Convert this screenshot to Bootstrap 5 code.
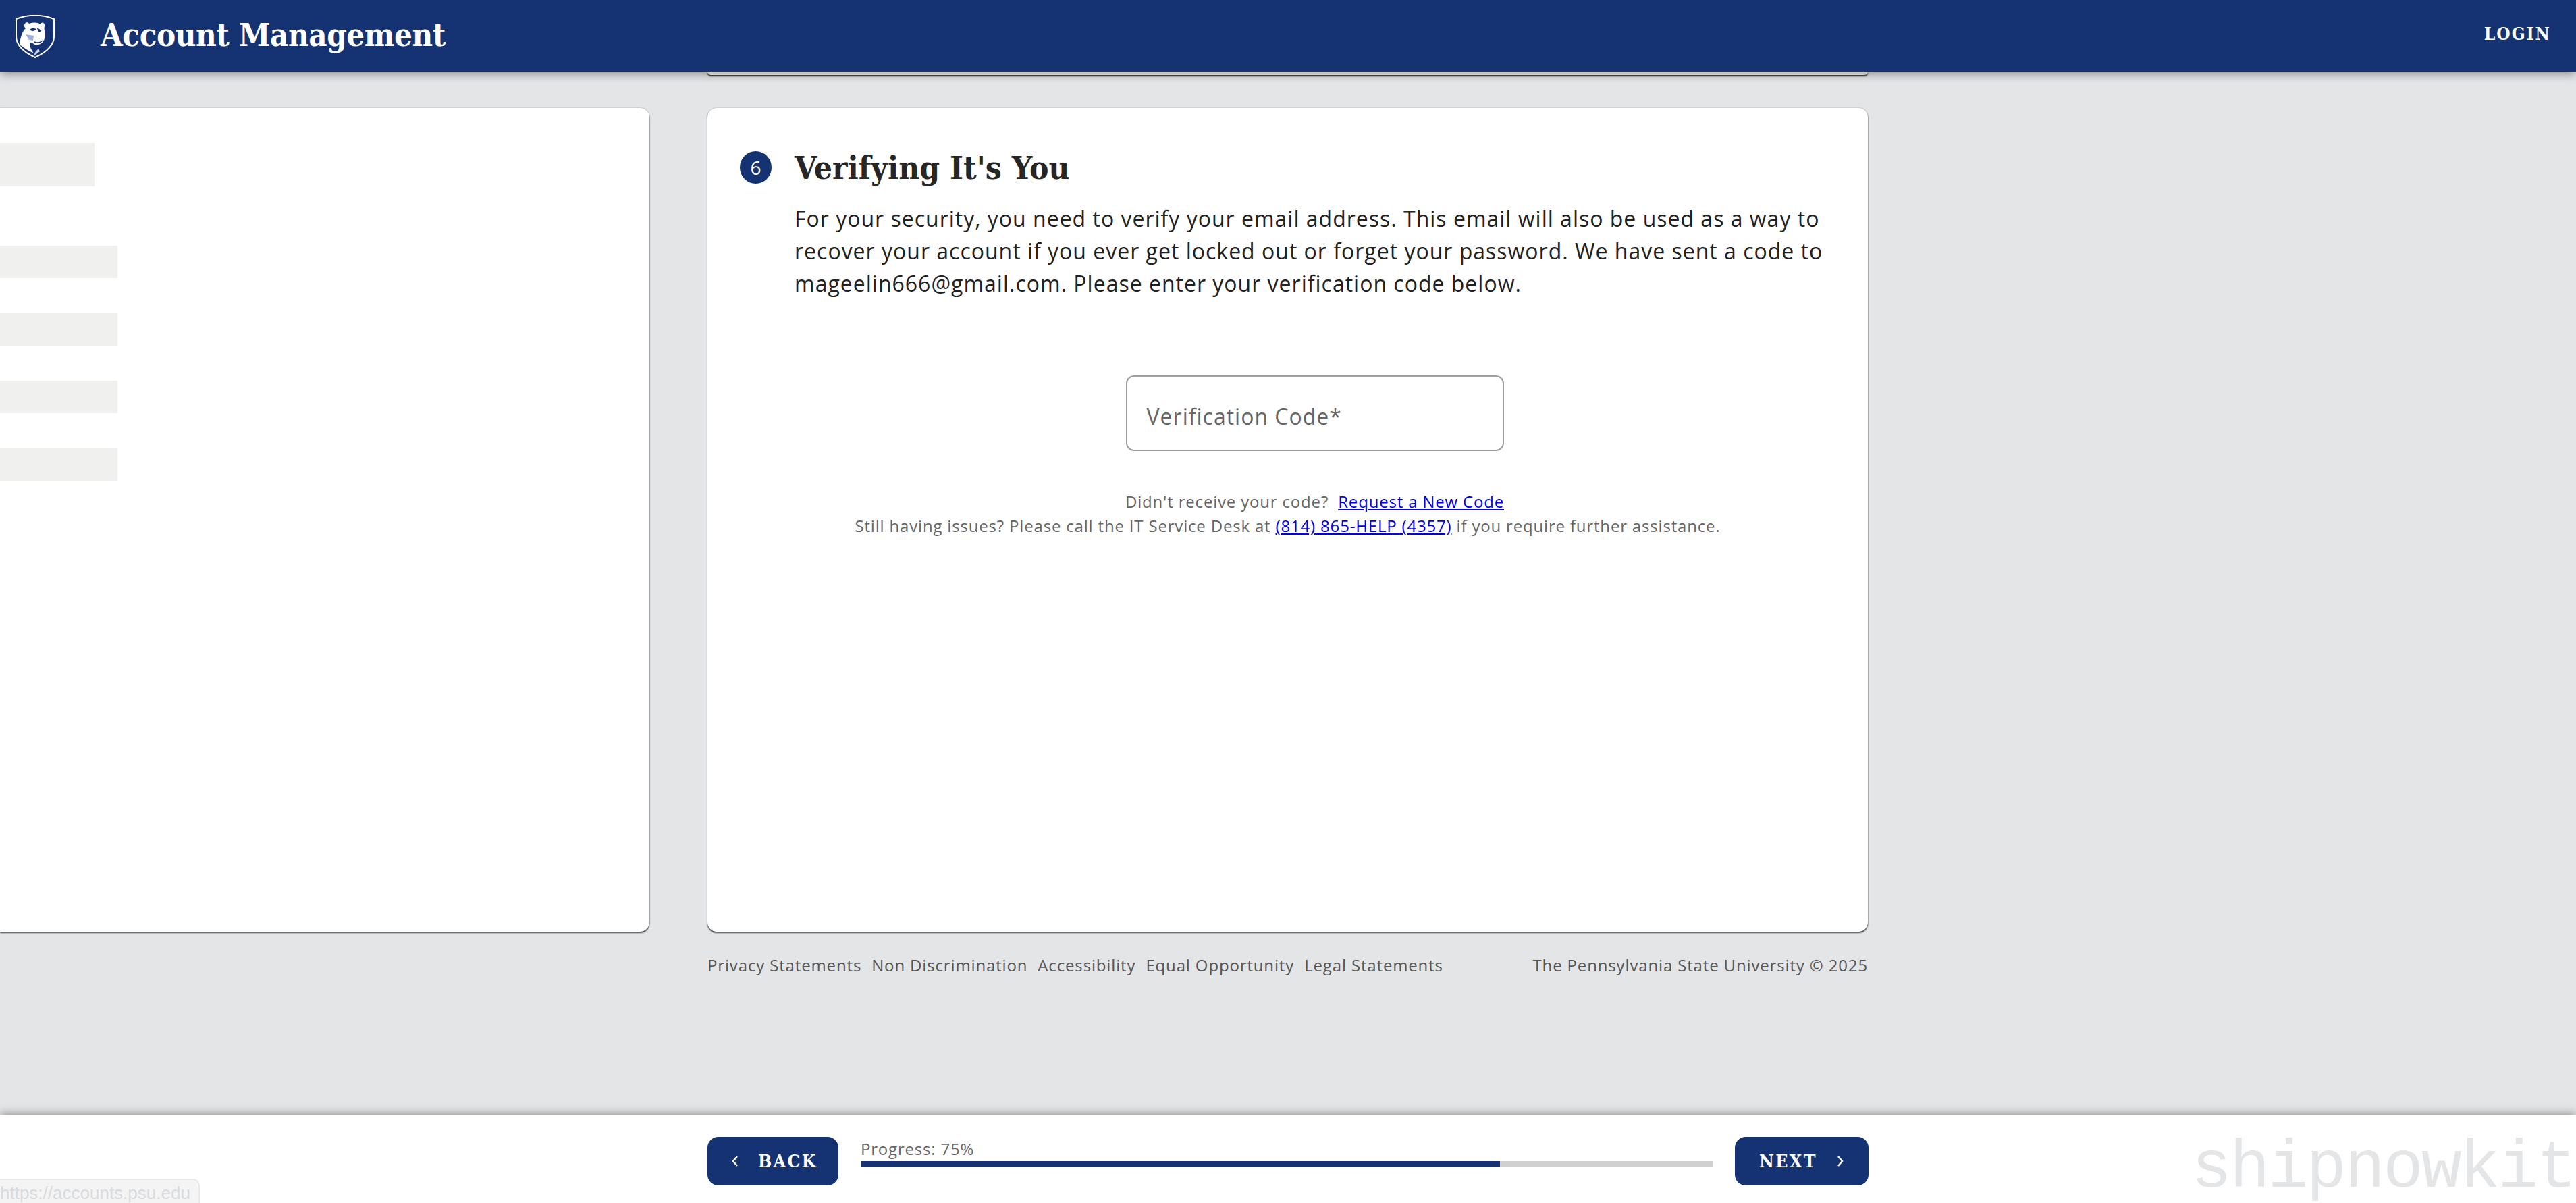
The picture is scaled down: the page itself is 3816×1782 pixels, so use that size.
<!DOCTYPE html>
<html lang="en">

<head>
  <meta charset="UTF-8" />
  <meta name="viewport" content="width=device-width, initial-scale=1" />
  <title>Account Management</title>
  <link href="https://cdn.jsdelivr.net/npm/bootstrap@5.3.0/dist/css/bootstrap.min.css" rel="stylesheet" />
  <style>
    body { background: #e4e5e7; font-family: "Open Sans", sans-serif; color: #212121; }
    .slab { font-family: "DejaVu Serif Condensed", "DejaVu Serif", serif; font-weight: 700; }

    .top-bar { background: #153373; height: 106px; padding: 0; box-shadow: 0 3px 14px rgba(0, 0, 0, .42); z-index: 5; }
    .psu-logo { width: 58px; height: 64px; margin-left: 23px; margin-right: 68px; margin-top: 1px; }
    .app-title { color: #fff; font-size: 47px; letter-spacing: -.45px; margin: -2px 0 0; }
    .login-link { color: #fff; font-size: 26px; letter-spacing: 2px; margin-right: 37px; text-decoration: none; margin-top: -5px; }

    .main-area { min-height: 0; }
    .panel { border: 0; border-radius: 14px; background: #fff; box-shadow: 0 2px 2px rgba(0, 0, 0, .7), 0 0 2px rgba(0, 0, 0, .35); }
    .side-col { flex: 0 0 962px; padding-top: 54px; padding-bottom: 0; }
    .side-panel { height: 1220px; border-radius: 0 14px 14px 0; padding-top: 52px; }
    .skel { background: #f0f0ef; height: 48px; width: 174px; margin-bottom: 52px; }
    .skel-head { height: 64px; width: 140px; margin-bottom: 88px; }
    .step-col { flex: 0 0 1719px; margin-left: 86px; }
    .prev-panel { height: 5px; border-radius: 0 0 14px 14px; margin-bottom: 49px; }
    .step-panel { height: 1220px; padding: 64px 48px 0; }
    .step-num { flex: 0 0 47px; height: 48px; border-radius: 50%; background: #153373; color: #fff; font-size: 28px; margin-right: 34px; }
    .step-title { font-size: 47.5px; margin: 0; color: #262626; line-height: 48px; }
    .step-indent { margin: 28px 1px 0 81px; }
    .step-text { font-size: 32px; line-height: 48px; letter-spacing: 1px; margin: 0; color: #212121; }

    .code-field { width: 560px; margin-top: 112px; }
    .code-field .form-control { height: 112px; min-height: 112px; border: 2px solid #9e9e9e; border-radius: 12px; }
    .code-field label { font-size: 32px; letter-spacing: 1px; color: #666; padding: 36px 30px; }
    .help-text { font-size: 24px; line-height: 36px; color: #666; letter-spacing: .82px; margin: 0; }
    .help-first { margin-top: 57px; }
    .help-text a { color: #00e; }
    .legal-row { margin-top: 32px; font-size: 24px; color: #555; letter-spacing: .85px; }
    .legal-row a { color: #555; text-decoration: none; margin-right: 15px; }

    .bottom-bar { flex: 0 0 130px; background: #fff; box-shadow: 0 -3px 12px rgba(0, 0, 0, .35); padding: 6px 0 0 1048px; z-index: 5; }
    .nav-btn { background: #153373; color: #fff; border: 0; border-radius: 16px; height: 72px; font-size: 26.5px; letter-spacing: 2.4px; padding: 0; }
    .nav-btn svg { width: 12px; height: 18px; }
    .back-btn { width: 194px; gap: 28px; padding-left: 4px; }
    .next-btn { width: 198px; gap: 28px; }
    .progress-wrap { width: 1263px; margin: 0 32px 0 33px; padding-bottom: 25px; }
    .progress-label { font-size: 24px; line-height: 30px; color: #666; letter-spacing: .8px; }
    .progress-track { height: 8px; border-radius: 0; background: #d0d0d0; margin-top: 3px; }
    .progress-track .progress-bar { background: #153373; }

    .status-tip { left: 0; bottom: 0; width: 296px; height: 36px; background: #f4f4f4; border: 2px solid #e9e9e9; border-left: 0; border-bottom: 0; border-radius: 0 10px 0 0; color: #d9dbde; font: 26px/38px "Liberation Sans", sans-serif; white-space: nowrap; z-index: 6; }
    .watermark { right: 2px; bottom: -10px; font: 100px/120px "Liberation Mono", monospace; letter-spacing: -3.2px; color: #e4e5e7; z-index: 6; }
  </style>
</head>

<body class="d-flex flex-column vh-100 overflow-hidden position-relative">

  <!-- Barra superior -->
  <nav class="navbar top-bar flex-shrink-0 flex-nowrap">
    <div class="d-flex align-items-center">
      <svg class="psu-logo" viewBox="0 0 58 64">
        <path d="M1 6C18 -1 40 -1 57 6V32C57 46 44 56 29 63C14 56 1 46 1 32Z" fill="none" stroke="#fff" stroke-width="2" />
        <path d="M13 16C13 11 18 10 20 13C26 11 32 11 37 14C38 10 43 11 43 15C43 18 42 20 43 23C45 29 44 35 41 39C38 44 31 46 27 43C24 41 22 40 21 43C21 48 24 52 27 57C20 53 12 49 6 44C7 34 10 24 15 20C14 19 13 18 13 16Z" fill="#fff" />
        <path d="M21 22C24 19 29 19 31 22C28 24 24 25 21 22Z" fill="#153373" />
        <path d="M32 20C35 20 37 22 38 25L34 26Z" fill="#153373" />
        <path d="M28 40C32 42 37 41 40 38" fill="none" stroke="#153373" stroke-width="1.4" />
        <path d="M15 29L27 31L26 38L20 37Z" fill="#9fb0e0" />
        <path d="M27 60L30 54L34 50L36 54L31 58Z" fill="#c9d3ee" />
      </svg>
      <h1 class="app-title slab">Account Management</h1>
    </div>
    <a href="#" class="login-link slab">LOGIN</a>
  </nav>

  <!-- Contenido -->
  <main class="main-area flex-grow-1 d-flex">
    <div class="side-col">
      <div class="card panel side-panel">
        <div class="skel skel-head"></div>
        <div class="skel"></div>
        <div class="skel"></div>
        <div class="skel"></div>
        <div class="skel"></div>
      </div>
    </div>

    <div class="step-col">
      <div class="panel prev-panel"></div>
      <div class="card panel step-panel">
        <div class="d-flex align-items-center">
          <span class="step-num d-flex align-items-center justify-content-center">6</span>
          <h2 class="step-title slab">Verifying It's You</h2>
        </div>
        <div class="step-indent">
          <p class="step-text">For your security, you need to verify your email address. This email will also be used as a way to recover your account if you ever get locked out or forget your password. We have sent a code to mageelin666@gmail.com. Please enter your verification code below.</p>

          <div class="form-floating code-field mx-auto">
            <input type="text" class="form-control" id="codigo" placeholder=" " />
            <label for="codigo">Verification Code*</label>
          </div>

          <p class="help-text help-first text-center">Didn't receive your code?&nbsp; <a href="#">Request a New Code</a></p>
        </div>
        <p class="help-text text-center">Still having issues? Please call the IT Service Desk at <a href="#">(814) 865-HELP (4357)</a> if you require further assistance.</p>
      </div>
      <div class="legal-row d-flex justify-content-between">
        <div><a href="#">Privacy Statements</a><a href="#">Non Discrimination</a><a href="#">Accessibility</a><a href="#">Equal Opportunity</a><a href="#">Legal Statements</a></div>
        <div>The Pennsylvania State University © 2025</div>
      </div>
    </div>
  </main>

  <!-- Barra inferior -->
  <div class="bottom-bar d-flex align-items-center">
    <button class="btn nav-btn back-btn slab d-flex align-items-center justify-content-center">
      <svg viewBox="0 0 12 18"><path d="M9 2L3 9L9 16" fill="none" stroke="#fff" stroke-width="2.4" /></svg>
      <span>BACK</span>
    </button>
    <div class="progress-wrap">
      <div class="progress-label">Progress: 75%</div>
      <div class="progress progress-track">
        <div class="progress-bar" style="width: 75%"></div>
      </div>
    </div>
    <button class="btn nav-btn next-btn slab d-flex align-items-center justify-content-center">
      <span>NEXT</span>
      <svg viewBox="0 0 12 18"><path d="M3 2L9 9L3 16" fill="none" stroke="#fff" stroke-width="2.4" /></svg>
    </button>
  </div>

  <div class="status-tip position-absolute">https://accounts.psu.edu</div>
  <div class="watermark position-absolute">shipnowkit</div>

  <script src="https://cdn.jsdelivr.net/npm/bootstrap@5.3.0/dist/js/bootstrap.bundle.min.js"></script>
</body>

</html>
